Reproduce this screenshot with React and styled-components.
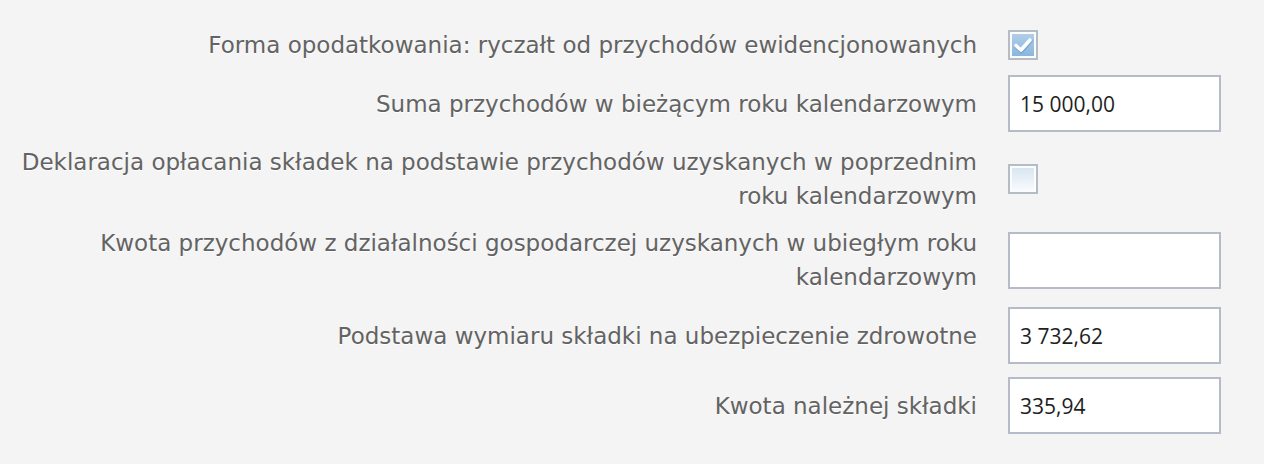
import { Fragment } from "react";
import styled, { createGlobalStyle } from "styled-components";

const GlobalStyle = createGlobalStyle`
  html, body {
    margin: 0;
    padding: 0;
    background: #f4f4f4;
  }
`;

const Form = styled.div`
  display: grid;
  grid-template-columns: 961px 213px;
  column-gap: 31px;
  row-gap: 13px;
  align-items: center;
  padding: 28px 0 0 16px;
`;

const Label = styled.label`
  text-align: right;
  font-family: "DejaVu Sans", Verdana, sans-serif;
  font-size: 23px;
  line-height: 34px;
  color: #636363;
  text-shadow: 0 1px 0 #ffffff;
`;

const Input = styled.input`
  box-sizing: border-box;
  width: 213px;
  height: 57px;
  margin: 0;
  padding: 0 10px;
  border: 2px solid #b6bcc7;
  background: #ffffff;
  font-family: "Open Sans", "Noto Sans", sans-serif;
  font-size: 21px;
  color: #1e1e1e;
  outline: none;
`;

const Box = styled.span`
  box-sizing: border-box;
  display: flex;
  align-items: center;
  justify-content: center;
  width: 30px;
  height: 30px;
  border: 2px solid #b6bcc6;
  box-shadow: inset 0 0 0 2px #fbfcfd;
  background: ${(p) =>
    p.$checked
      ? "linear-gradient(to bottom, #b4d0ea, #86b4dd)"
      : "linear-gradient(to bottom, #d6e4f0, #fafcfe)"};
`;

function Checkbox({ checked }) {
  return (
    <Box $checked={checked}>
      {checked && (
        <svg width="20" height="18" viewBox="0 0 20 18">
          <path
            d="M3 9.5 L8 14 L17 4"
            fill="none"
            stroke="#5b8fbf"
            strokeWidth="4.5"
            strokeLinecap="round"
            strokeLinejoin="round"
            transform="translate(0.5 1)"
            opacity="0.5"
          />
          <path
            d="M3 9.5 L8 14 L17 4"
            fill="none"
            stroke="#ffffff"
            strokeWidth="3.6"
            strokeLinecap="round"
            strokeLinejoin="round"
          />
        </svg>
      )}
    </Box>
  );
}

const rows = [
  { label: "Forma opodatkowania: ryczałt od przychodów ewidencjonowanych", type: "check", checked: true },
  { label: "Suma przychodów w bieżącym roku kalendarzowym", type: "input", value: "15 000,00" },
  { label: "Deklaracja opłacania składek na podstawie przychodów uzyskanych w poprzednim roku kalendarzowym", type: "check", checked: false },
  { label: "Kwota przychodów z działalności gospodarczej uzyskanych w ubiegłym roku kalendarzowym", type: "input", value: "" },
  { label: "Podstawa wymiaru składki na ubezpieczenie zdrowotne", type: "input", value: "3 732,62" },
  { label: "Kwota należnej składki", type: "input", value: "335,94" },
];

export default function App() {
  return (
    <>
      <GlobalStyle />
      <Form>
        {rows.map((r, i) => (
          <Fragment key={i}>
            <Label>{r.label}</Label>
            {r.type === "check" ? (
              <Checkbox checked={r.checked} />
            ) : (
              <Input defaultValue={r.value} readOnly />
            )}
          </Fragment>
        ))}
      </Form>
    </>
  );
}
